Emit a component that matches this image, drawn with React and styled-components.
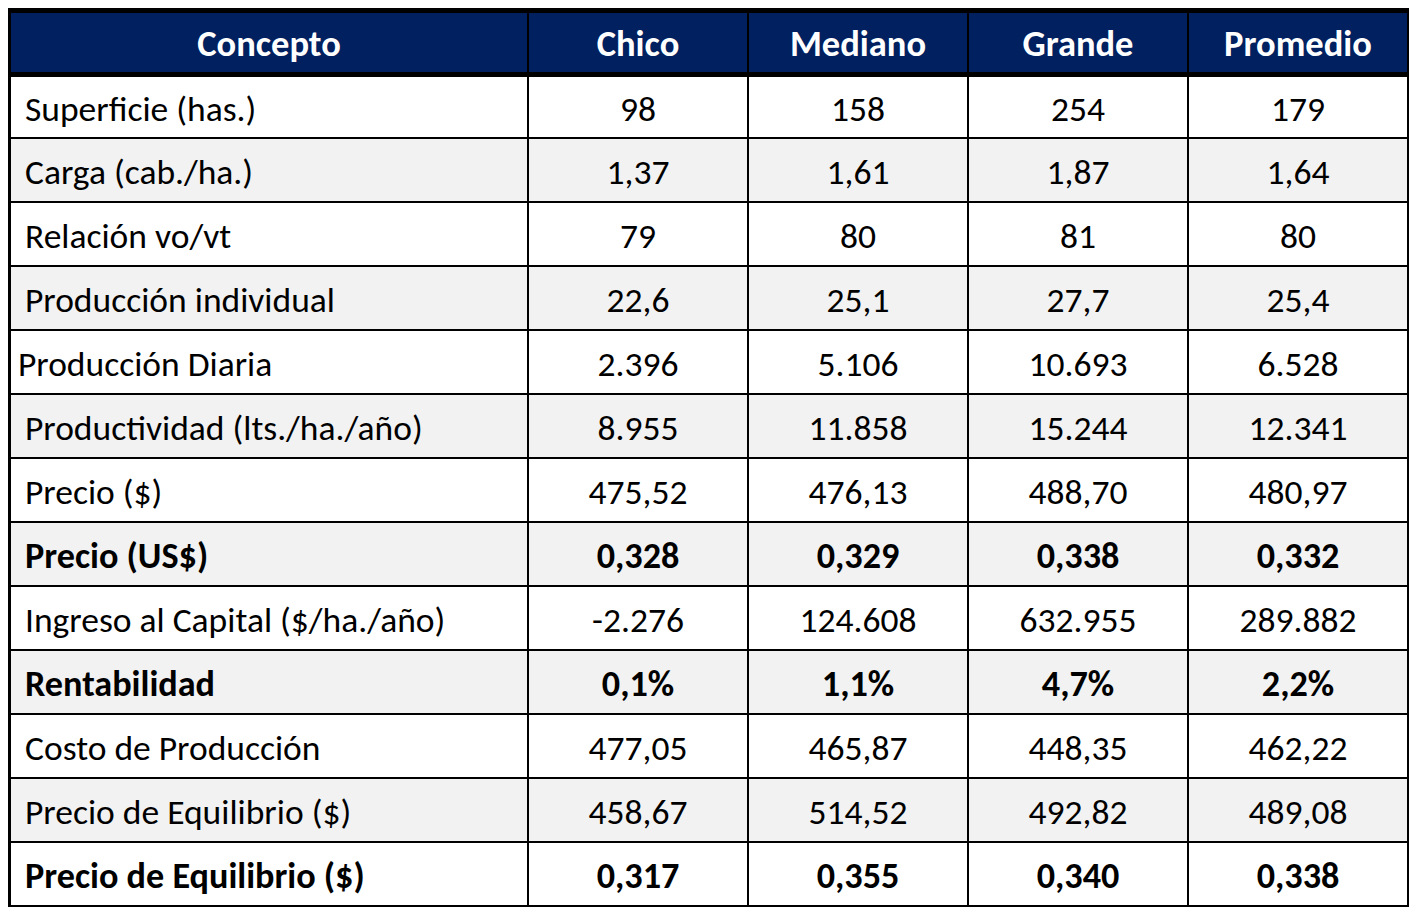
import React from 'react';
import styled, { createGlobalStyle } from 'styled-components';

const GlobalStyle = createGlobalStyle`
  body {
    margin: 8px;
    background: #ffffff;
    font-family: Carlito, Calibri, Lato, "Open Sans", sans-serif;
  }
`;

const columns = ['Concepto', 'Chico', 'Mediano', 'Grande', 'Promedio'];

const rows = [
  { label: 'Superficie (has.)', values: ['98', '158', '254', '179'] },
  { label: 'Carga (cab./ha.)', values: ['1,37', '1,61', '1,87', '1,64'] },
  { label: 'Relación vo/vt', values: ['79', '80', '81', '80'] },
  { label: 'Producción individual', values: ['22,6', '25,1', '27,7', '25,4'] },
  { label: 'Producción Diaria', values: ['2.396', '5.106', '10.693', '6.528'], tight: true },
  { label: 'Productividad (lts./ha./año)', values: ['8.955', '11.858', '15.244', '12.341'] },
  { label: 'Precio ($)', values: ['475,52', '476,13', '488,70', '480,97'] },
  { label: 'Precio (US$)', values: ['0,328', '0,329', '0,338', '0,332'], bold: true },
  { label: 'Ingreso al Capital ($/ha./año)', values: ['-2.276', '124.608', '632.955', '289.882'] },
  { label: 'Rentabilidad', values: ['0,1%', '1,1%', '4,7%', '2,2%'], bold: true },
  { label: 'Costo de Producción', values: ['477,05', '465,87', '448,35', '462,22'] },
  { label: 'Precio de Equilibrio ($)', values: ['458,67', '514,52', '492,82', '489,08'] },
  { label: 'Precio de Equilibrio ($)', values: ['0,317', '0,355', '0,340', '0,338'], bold: true },
];

export default function App() {
  return (
    <>
      <GlobalStyle />
      <Sheet>
        <HeaderRow>
          {columns.map((c) => (
            <HeadCell key={c}>{c}</HeadCell>
          ))}
        </HeaderRow>
        {rows.map((r, i) => (
          <Row key={i} $bold={r.bold}>
            <LabelCell $tight={r.tight}>{r.label}</LabelCell>
            {r.values.map((v, j) => (
              <ValueCell key={j}>{v}</ValueCell>
            ))}
          </Row>
        ))}
      </Sheet>
    </>
  );
}

const Sheet = styled.div`
  width: fit-content;
  border-left: 3px solid #000;
`;

const HeaderRow = styled.div`
  display: grid;
  grid-template-columns: 518px repeat(4, 220px);
  height: 69px;
  box-sizing: border-box;
  background: #002060;
  border-top: 5px solid #000;
  border-bottom: 5px solid #000;
`;

const HeadCell = styled.div`
  display: flex;
  align-items: center;
  justify-content: center;
  border-right: 2px solid #000;
  color: #ffffff;
  font-weight: 800;
  font-size: 36.5px;
  padding-top: 1px;
`;

const Row = styled.div`
  display: grid;
  grid-template-columns: 518px repeat(4, 220px);
  height: 64px;
  box-sizing: border-box;
  border-bottom: 2px solid #000;
  font-size: ${(p) => (p.$bold ? '36.2px' : '35.5px')};
  font-weight: ${(p) => (p.$bold ? 700 : 400)};
  color: #000;
  background: #ffffff;

  &:nth-child(odd) {
    background: #f2f2f2;
  }

  &:nth-child(2) {
    height: 62px;
  }
`;

const LabelCell = styled.div`
  display: flex;
  align-items: center;
  padding-top: 3px;
  padding-left: ${(p) => (p.$tight ? '7px' : '14px')};
  border-right: 2px solid #000;
  white-space: nowrap;
`;

const ValueCell = styled.div`
  display: flex;
  align-items: center;
  justify-content: center;
  padding-top: 3px;
  border-right: 2px solid #000;
`;
